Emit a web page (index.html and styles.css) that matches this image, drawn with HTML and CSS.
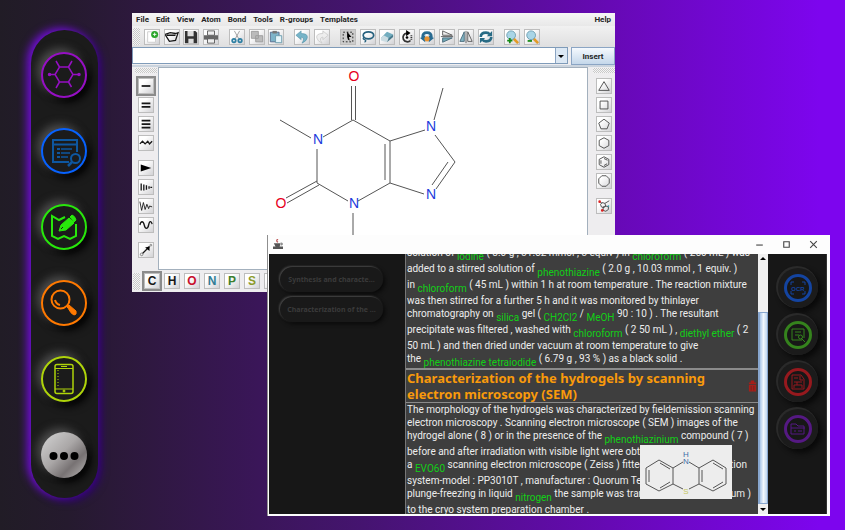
FILE: index.html
```html
<!DOCTYPE html>
<html lang="en">
<head>
<meta charset="utf-8">
<title>Chemistry workspace</title>
<link rel="stylesheet" href="styles.css">
</head>
<body>
<nav class="dock" aria-label="Tools">
  <button class="dock-btn violet" aria-label="Structure"><svg viewBox="0 0 46 46"><path d="M18.500 15h9l4.500 7.500-4.500 7.500h-9L14 22.500zM18.500 15l-3.500-6M27.500 15l3.500-6M32 22.500h6M27.500 30l3 5M18.500 30l-3.500 6M14 22.500H8.500"/><g class="solid"><circle cx="8.500" cy="22.500" r="1"/><circle cx="38" cy="22.500" r="1"/></g></svg></button>
  <button class="dock-btn blue" aria-label="Browse"><svg viewBox="0 0 46 46"><path d="M28 34H12V12h24v12M12 16.500h24" stroke-width="2"/><path d="M16 21h3M16 25h3M16 29h3" stroke-width="2"/><path d="M20 21h11M20 25h9M20 29h7" stroke-width="1.500"/><circle cx="34.500" cy="30.500" r="4.500" stroke-width="2"/><path d="M31 34l-4 4" stroke-width="2.500"/></svg></button>
  <button class="dock-btn green" aria-label="Edit map"><svg viewBox="0 0 46 46"><path d="M24 13l-6 3-7-4v20l6 3 6-3 6 3 6-3V20" stroke-width="2"/><path class="solid" d="M18 27l2-6 8-7 5 5-8 7zM29 13l2-2q3 1 4 5l-2 2z"/><path d="M20 25l2-2" stroke="#1b1b1b"/></svg></button>
  <button class="dock-btn orange" aria-label="Search"><svg viewBox="0 0 46 46"><circle cx="19.500" cy="19.500" r="9" stroke-width="2"/><path d="M14 20q1 4 5 5" stroke-width="2"/><path class="solid" d="M26 27l2-2 7 6q1 4-2 4-3-1-6-7z"/></svg></button>
  <button class="dock-btn lime" aria-label="Mobile"><svg viewBox="0 0 46 46"><rect x="14" y="8.500" width="18" height="29" rx="2" stroke-width="1.500"/><path d="M14 12.500h18M14 33h18M20 10.500h6"/><path d="M17 14v18" stroke-dasharray="1 2"/><circle class="solid" cx="23" cy="35" r="1"/></svg></button>
  <button class="dock-btn more" aria-label="More"><svg viewBox="0 0 46 46"><circle cx="12.500" cy="24" r="4"/><circle cx="23" cy="24" r="4"/><circle cx="33.500" cy="24" r="4"/></svg></button>
</nav>

<section class="window editor" aria-label="Molecule editor">
  <div class="menubar">
    <a href="#">File</a><a href="#">Edit</a><a href="#">View</a><a href="#">Atom</a><a href="#">Bond</a><a href="#">Tools</a><a href="#">R-groups</a><a href="#">Templates</a><a href="#" class="help">Help</a>
  </div>
  <div class="toolbar">
    <span class="grip"></span>
    <div class="group four">
      <button class="tool" aria-label="New"><svg viewBox="0 0 16 16"><path fill="#fff" stroke="#ccc" d="M3 2h9v12H3z"/><circle cx="11" cy="5" r="4" fill="#2aa52a"/><path d="M11 3v4M9 5h4" stroke="#fff"/></svg></button>
      <button class="tool" aria-label="Open"><svg viewBox="0 0 16 16"><path class="ink thick" d="M0 5l6-2 6 1 3-1-3 9-7 1zM2 6h10"/></svg></button>
      <button class="tool" aria-label="Save"><svg viewBox="0 0 16 16"><path fill="#333" d="M1 1h12l2 2v12H1z"/><path fill="#ddd" d="M4 1h7v6H4zM5 10h6v5H5z"/></svg></button>
      <button class="tool" aria-label="Print"><svg viewBox="0 0 16 16"><path fill="#666" d="M0 6h16v5H0z"/><path fill="#eee" stroke="#555" d="M4 1h8v5H4zM4 10h8v5H4z"/></svg></button>
    </div>
    <div class="group three">
      <button class="tool" aria-label="Cut"><svg viewBox="0 0 16 16"><path d="M5 1l5 9M11 1l-5 9" stroke="#999"/><g fill="none" stroke="#2d7fa3" stroke-width="2"><circle cx="4.500" cy="12" r="2"/><circle cx="11.500" cy="12" r="2"/></g></svg></button>
      <button class="tool" aria-label="Copy"><svg viewBox="0 0 16 16"><path fill="#bbb" stroke="#999" d="M1.500 1.500h8v8h-8zM6.500 6.500h8v7h-8z"/></svg></button>
      <button class="tool" aria-label="Paste"><svg viewBox="0 0 16 16"><path fill="#7eb3c9" stroke="#568" d="M1.500 2.500h10v11h-10z"/><path fill="#777" d="M4 1h5v3H4z"/><path fill="#e6f5fa" stroke="#69a" d="M7.500 6.500h7v8h-7z"/></svg></button>
    </div>
    <div class="group two">
      <button class="tool" aria-label="Undo"><svg viewBox="0 0 16 16"><path fill="#76b4c8" stroke="#4a8ba2" stroke-width=".6" d="M1 6l6-5v3q8 0 7 5-1 4-6 6 4-6-1-7v3z"/></svg></button>
      <button class="tool" aria-label="Redo"><svg viewBox="0 0 16 16"><path fill="#eee" stroke="#ccc" d="M15 6l-6-5v3q-8 0-7 5 1 4 6 6-4-6 1-7v3z"/></svg></button>
    </div>
    <div class="group eight">
      <button class="tool dark" aria-label="Select"><svg viewBox="0 0 16 16"><path class="ink" stroke-dasharray="2 2" d="M2.500 2.500h11v11h-11z"/><path d="M7 2l5 6H9l1 4-2-1-1-3z"/></svg></button>
      <button class="tool" aria-label="Lasso"><svg viewBox="0 0 16 16"><ellipse cx="8.500" cy="6" rx="6" ry="4" fill="none" stroke="#28627f" stroke-width="2"/><path d="M4 8q-3 2 0 3t0 3" fill="none" stroke="#28627f" stroke-width="1.500"/></svg></button>
      <button class="tool" aria-label="Erase"><svg viewBox="0 0 16 16"><path fill="#72adbf" d="M1 9l7-7 7 3-7 7z"/><path fill="#cbdce2" d="M1 9l3-3 6 3-2 5-7-2z"/><path fill="#477a8c" d="M8 14l2-5 5-4v3z"/></svg></button>
      <button class="tool" aria-label="Rotate"><svg viewBox="0 0 16 16"><path d="M8 3.500a5 5 0 1 0 4 8.500" fill="none" stroke="#333" stroke-width="2"/><path d="M7 0l5 3.500L7 7z"/><circle cx="8" cy="8.500" r="1.500"/><path d="M13 6v5" stroke="#333" stroke-width="2" stroke-dasharray="1 1"/></svg></button>
      <button class="tool" aria-label="Rotate 3D"><svg viewBox="0 0 16 16"><path d="M3 8q0-5 5-5t5 5" fill="none" stroke="#286b91" stroke-width="3"/><path d="M0 9l6-3v8zM16 9l-6-3v8z" fill="#286b91"/><circle cx="8" cy="10" r="3" fill="#e79334"/></svg></button>
      <button class="tool" aria-label="Flip vertical"><svg viewBox="0 0 16 16"><path d="M1 7.500h14M3 1l11 5H3z" stroke="#555" fill="#eee"/><path d="M3 9h11L3 14z" fill="#72a9b6" stroke="#467"/></svg></button>
      <button class="tool" aria-label="Flip horizontal"><svg viewBox="0 0 16 16"><path d="M6 2v11H1z" fill="#83b6c4" stroke="#467"/><path d="M8 1v14M10 2v11h5z" fill="#eee" stroke="#555"/></svg></button>
      <button class="tool" aria-label="Refresh"><svg viewBox="0 0 16 16"><path d="M2 8q0-5 6-5 3 0 4 2M14 8q0 5-6 5-3 0-4-2" fill="none" stroke="#286b85" stroke-width="3"/><path fill="#286b85" d="M15 1v6H9zM1 15V9h6z"/></svg></button>
    </div>
    <div class="group two">
      <button class="tool" aria-label="Zoom in"><svg viewBox="0 0 16 16"><path d="M10 10l5 5" stroke="#e29b28" stroke-width="3"/><circle cx="7" cy="6" r="5" fill="#a9d5e6" stroke="#6899ad"/><path d="M5.500 9v6M2.500 12h6" stroke="#148a14" stroke-width="2"/></svg></button>
      <button class="tool" aria-label="Zoom out"><svg viewBox="0 0 16 16"><path d="M10 10l5 5" stroke="#e29b28" stroke-width="3"/><circle cx="7" cy="6" r="5" fill="#a9d5e6" stroke="#6899ad"/><path d="M3 12.500h5" stroke="#148a14" stroke-width="2"/></svg></button>
    </div>
  </div>
  <div class="entry">
    <div class="combo"><input type="text" aria-label="Structure name"><button class="arrow" aria-label="Show list"><svg viewBox="0 0 10 10"><path d="M2 4h6L5 7z"/></svg></button></div>
    <button class="insert">Insert</button>
  </div>
  <div class="work">
    <div class="palette left">
      <span class="grip wide"></span>
      <button class="tool selected" aria-label="Single bond"><svg viewBox="0 0 16 16"><path class="ink bold" d="M3 8h10"/></svg></button>
      <button class="tool" aria-label="Double bond"><svg viewBox="0 0 16 16"><path class="ink bold" d="M3 6h10M3 10h10"/></svg></button>
      <button class="tool" aria-label="Triple bond"><svg viewBox="0 0 16 16"><path class="ink bold" d="M3 4h10M3 8h10M3 12h10"/></svg></button>
      <button class="tool" aria-label="Any bond"><svg viewBox="0 0 16 16"><path class="ink thick" d="M1 9l3-3 3 3 3-3 2 3 3-3"/></svg></button>
      <button class="tool split" aria-label="Wedge bond"><svg viewBox="0 0 16 16"><path d="M2 4l12 4-12 4z"/></svg></button>
      <button class="tool" aria-label="Hash bond"><svg viewBox="0 0 16 16"><path class="ink thick" d="M2.500 4v8M5.500 5v7M8.500 6v5M11.500 7v3M13 8.500h2"/></svg></button>
      <button class="tool" aria-label="Squiggle bond"><svg viewBox="0 0 16 16"><path class="ink" d="M1 3l2 10 2-9 2 8 2-6 2 5 1-3 3 1"/></svg></button>
      <button class="tool" aria-label="Wave bond"><svg viewBox="0 0 16 16"><path class="ink thick" d="M1 8C2 3 5 3 6 8s4 5 5 0 3-5 4-1"/></svg></button>
      <button class="tool split" aria-label="Chain"><svg viewBox="0 0 16 16"><path class="ink thick" d="M4 12l8-8"/><path d="M12 4v5L7 5z"/><g fill="none" stroke="#777"><circle cx="3" cy="13" r="1.500"/><circle cx="13.500" cy="2.500" r="1"/></g></svg></button>
    </div>
    <svg class="canvas" viewBox="159 68 428 202" preserveAspectRatio="xMinYMin slice" role="img" aria-label="Caffeine">
      <g class="bonds"><path d="M351.500 86v34M355.500 86v34M353 120l-30 17M280 120l31 18M317 149v34M317 183l31 18M317 181l-31 17M319 185l-32 18M358 201l32-18M390 183v-42M385 180v-36M390 141l-37-21M390 141l35-11M390 183l34 11M434 120l9-32M435 135l20 27-19 27M448 162l-16 23M353 213v40"/></g>
      <g class="atoms"><text class="oxygen" x="354" y="81">O</text><text x="318" y="144">N</text><text class="oxygen" x="281" y="208">O</text><text x="354" y="208">N</text><text x="431" y="131">N</text><text x="431" y="199">N</text></g>
    </svg>
    <div class="palette right">
      <span class="grip wide"></span>
      <button class="tool" aria-label="Triangle"><svg viewBox="0 0 16 16"><path class="shape" d="M8 3l6 10H2z"/></svg></button>
      <button class="tool" aria-label="Square"><svg viewBox="0 0 16 16"><path class="shape" d="M3.500 3.500h9v9h-9z"/></svg></button>
      <button class="tool" aria-label="Pentagon"><svg viewBox="0 0 16 16"><path class="shape" d="M8 2.500l6 4.500-2.500 6.500h-7L2 7z"/></svg></button>
      <button class="tool" aria-label="Hexagon"><svg viewBox="0 0 16 16"><path class="shape" d="M8 2l5.500 3v6L8 14l-5.500-3V5z"/></svg></button>
      <button class="tool" aria-label="Benzene"><svg viewBox="0 0 16 16"><path class="shape" d="M8 2l5.500 3v6L8 14l-5.500-3V5zM8 4l4 2M11.500 10L8 12M4.500 6v4"/></svg></button>
      <button class="tool" aria-label="Octagon"><svg viewBox="0 0 16 16"><path class="shape" d="M5.500 2h5L14 5.500v5L10.500 14h-5L2 10.500v-5z"/></svg></button>
      <button class="tool split" aria-label="Template library"><svg viewBox="0 0 16 16"><path class="shape" d="M6 4l3 1 1 3-2 2-3-1-1-3zM10 8l3 1v3l-3 2-3-1V9zM9 5l5-3M3 3l3 2"/><g fill="#d22"><circle cx="3" cy="3" r="1.500"/><circle cx="6" cy="13" r="1.500"/></g><circle cx="13" cy="8" r="1" fill="#39a"/></svg></button>
    </div>
  </div>
  <div class="elements">
    <span class="grip"></span>
    <button class="tool atom selected">C</button><button class="tool atom">H</button><button class="tool atom el-o">O</button><button class="tool atom el-n">N</button><button class="tool atom el-p">P</button><button class="tool atom el-s">S</button><button class="tool atom" aria-label="More elements"></button>
  </div>
</section>

<section class="window reader" aria-label="Document reader">
  <header class="titlebar">
    <svg class="java" viewBox="0 0 12 12"><path fill="#555" d="M1 5h8l-1 4H3zM0 9h12v3H0z"/><path fill="none" stroke="#b55" stroke-width="1.500" d="M6 0q-3 2 0 4"/><path fill="none" stroke="#555" d="M9 5h2v2H9"/></svg>
    <button aria-label="Minimize"><svg viewBox="0 0 10 10"><path d="M2 5.500h6"/></svg></button>
    <button aria-label="Maximize"><svg viewBox="0 0 10 10"><path d="M2.500 2.500h5v5h-5z"/></svg></button>
    <button aria-label="Close"><svg viewBox="0 0 10 10"><path d="M2 2l6 6M8 2L2 8"/></svg></button>
  </header>
  <div class="content">
    <nav class="outline">
      <button>Synthesis and characte...</button>
      <button>Characterization of the ...</button>
    </nav>
    <main class="document">
      <div class="para first">
        <div class="line tall">solution of <a href="#">iodine</a> ( 8.0 g , 31.52 mmol , 3 equiv ) in <a href="#">chloroform</a> ( 250 mL ) was</div>
        <div class="line tall">added to a stirred solution of <a href="#">phenothiazine</a> ( 2.0 g , 10.03 mmol , 1 equiv. )</div>
        <div class="line tall">in <a href="#">chloroform</a> ( 45 mL ) within 1 h at room temperature . The reaction mixture</div>
        <div class="line">was then stirred for a further 5 h and it was monitored by thinlayer</div>
        <div class="line tall">chromatography on <a href="#">silica</a> gel ( <a href="#">CH2Cl2</a> / <a href="#">MeOH</a> 90 : 10 ) . The resultant</div>
        <div class="line tall">precipitate was filtered , washed with <a href="#">chloroform</a> ( 2 50 mL ) , <a href="#">diethyl ether</a> ( 2</div>
        <div class="line">50 mL ) and then dried under vacuum at room temperature to give</div>
        <div class="line tall">the <a href="#">phenothiazine tetraiodide</a> ( 6.79 g , 93 % ) as a black solid .</div>
      </div>
      <div class="heading">
        <h2>Characterization of the hydrogels by scanning<br>electron microscopy (SEM)</h2>
        <button class="trash" aria-label="Delete section"><svg viewBox="0 0 10 12"><path fill="#a51f1a" d="M1 2h2V0h4v2h2v2H1zM1 5h8v7H1z"/><path stroke="#6d2520" d="M3.500 6v5M6.500 6v5"/></svg></button>
      </div>
      <div class="para">
        <div class="line">The morphology of the hydrogels was characterized by fieldemission scanning</div>
        <div class="line">electron microscopy . Scanning electron microscope ( SEM ) images of the</div>
        <div class="line tall">hydrogel alone ( 8 ) or in the presence of the <a href="#">phenothiazinium</a> compound ( 7 )</div>
        <div class="line">before and after irradiation with visible light were obt</div>
        <div class="line tall spread"><span>a <a href="#">EVO60</a> scanning electron microscope ( Zeiss ) fitted</span><span>tion</span></div>
        <div class="line">system-model : PP3010T , manufacturer : Quorum Te</div>
        <div class="line tall spread last"><span>plunge-freezing in liquid <a href="#">nitrogen</a> the sample was tran</span><span>um )</span></div>
        <div class="line">to the cryo system preparation chamber .</div>
      </div>
      <svg class="preview" viewBox="0 0 92 54" role="img" aria-label="Phenothiazine">
        <path d="M6 23l13-8 14 8v16l-14 7-13-7zM59 23l14-8 13 8v16l-13 7-14-7zM33 23l10-6M49 17l10 6M33 39l10 5M49 44l10-5M9 25v12M20 18l10 6M20 43l10-6M62 25v12M73 18l10 6M73 43l10-6"/>
        <text x="46" y="12">H</text><text x="46" y="19">N</text><text class="sulfur" x="46" y="49">S</text>
      </svg>
    </main>
    <div class="scroll"><button aria-label="Scroll up"><svg viewBox="0 0 10 10"><path d="M2 6h6L5 3z"/></svg></button><span class="track"></span><span class="thumb"></span><button aria-label="Scroll down"><svg viewBox="0 0 10 10"><path d="M2 4h6L5 7z"/></svg></button></div>
    <nav class="actions">
      <button class="c-blue" aria-label="OCR"><svg viewBox="0 0 26 26"><path d="M6 10V7h3M17 7h3v3M20 16v3h-3M9 19H6v-3"/><text x="13" y="16">OCR</text></svg></button>
      <button class="c-green" aria-label="Find in document"><svg viewBox="0 0 26 26"><path d="M17 18H7V7h12v9M10 10h6M10 13h4M16 16l4 4"/><circle cx="15.500" cy="15" r="2"/></svg></button>
      <button class="c-red" aria-label="Export"><svg viewBox="0 0 26 26"><path d="M7 6h9l3 4v10H7zM9 9h4M15 7v4h3M9 13h8M9 19v-3h8v3M12 13v3"/></svg></button>
      <button class="c-purple" aria-label="Open folder"><svg viewBox="0 0 26 26"><path d="M6 18V8h5l2 2h6v8zM6 12h14M9 15h2M13 15h4"/></svg></button>
    </nav>
  </div>
</section>
</body>
</html>
```
FILE: styles.css
```css
* { box-sizing: border-box; }
body {
  margin: 0;
  min-height: 100vh;
  position: relative;
  overflow: hidden;
  padding: 30px 31px;
  background: linear-gradient(90deg, #211c26 0, #251a2e 8%, #2f1841 18%, #451470 43%, #6609b4 72%, #7d05ee 97%);
  font-family: "Liberation Sans", sans-serif;
}
button { padding: 0; border: 0; background: none; font: inherit; color: inherit; }
svg { display: block; }
a { color: inherit; text-decoration: none; }

.dock {
  width: 67px;
  padding: 22px 10px 20px;
  display: flex;
  flex-direction: column;
  gap: 30px;
  border-radius: 34px;
  background: #1b1b1b;
  box-shadow: -4px -2px 8px #700fd3, 3px 3px 9px #310078;
}
.dock-btn {
  width: 46px;
  height: 46px;
  border: 2px solid currentColor;
  border-radius: 50%;
  background: #1b1b1b;
  box-shadow: -4px -4px 9px #4b4b4b, 4px 4px 8px #000;
}
.dock-btn svg { width: 46px; height: 46px; margin: -2px; fill: none; stroke: currentColor; }
.dock-btn .solid { fill: currentColor; }
.violet { color: #960fc4; }
.violet svg { stroke-width: 1.500; }
.blue { color: #0762ff; }
.blue svg { color: #0e57a0; }
.green { color: #28e80b; }
.orange { color: #ff7900; }
.lime { color: #afd40a; }
.more { border: 0; color: #000; background: linear-gradient(135deg, #d5d5d5, #aaa7a7 45%, #777273 70%, #bdbaba); }
.more svg { margin: 0; fill: #000; stroke: none; }

.window { position: absolute; }
.editor {
  left: 132px;
  right: 230px;
  top: 13px;
  background: #eeedef;
  color: #252525;
}
.menubar {
  height: 13px;
  padding: 0 4px;
  display: flex;
  gap: 7px;
  font-family: Roboto, sans-serif;
  font-size: 8px;
  font-weight: bold;
  line-height: 13px;
  background: linear-gradient(#f6f6f6, #e8e8e8);
}
.help { margin-left: auto; }
.toolbar {
  height: 21px;
  display: flex;
  align-items: center;
  gap: 10px;
  background: linear-gradient(#f1f1f1, #dfdfe0);
}
.grip {
  width: 7px;
  height: 17px;
  margin-left: 1px;
  background: repeating-conic-gradient(#c9c9c9 0 25%, #f5f5f5 0 50%) 0 0 / 2px 2px;
}
.toolbar .grip { margin-right: -6px; }
.group { display: flex; justify-content: space-between; }
.four { width: 75px; }
.three { width: 55px; }
.two { width: 36px; }
.eight { width: 154px; }
.tool {
  width: 16px;
  height: 16px;
  flex: none;
  border: 1px solid #bdbdbd;
  background: linear-gradient(135deg, #fff 30%, #d2d2d5);
}
.tool svg { width: 14px; height: 14px; }
.tool.dark { background: #ccc; }
.tool.selected { outline: 2px solid #8b8b8b; }
.ink { fill: none; stroke: #171717; }
.bold { stroke-width: 2; }
.thick { stroke-width: 1.500; }
.shape { fill: none; stroke: #444; }
.entry { height: 18px; display: flex; gap: 3px; }
.combo { flex: 1; height: 17px; display: flex; border: 1px solid #7f9bb9; background: #fff; }
.combo input { flex: 1; min-width: 0; border: 0; padding: 0; background: #fff; outline: none; }
.arrow { width: 12px; border-left: 1px solid #8ba5c4; background: #dce8f4; }
.arrow svg { width: 10px; height: 10px; }
.insert {
  width: 44px;
  border: 1px solid #8ba5c4;
  font-family: Roboto, sans-serif;
  font-size: 8px;
  font-weight: bold;
  background: linear-gradient(#f5f9fe, #c4d7ea);
}
.work { display: flex; align-items: stretch; border-top: 2px solid #cbd4de; }
.palette {
  width: 27px;
  display: flex;
  flex-direction: column;
  align-items: center;
  gap: 3px;
  padding-bottom: 11px;
}
.left { width: 26px; padding-left: 2px; }
.right { padding-left: 4px; }
.grip.wide { width: 22px; height: 5px; margin: 1px 0 2px; }
.split { margin-top: 6px; }
.canvas { flex: 1; min-width: 0; height: 203px; background: #fff; border: 1px solid #a3b0bd; }
.bonds { fill: none; stroke: #555; }
.atoms { fill: #213bdc; font-size: 14px; text-anchor: middle; }
.oxygen { fill: #e6001c; }
.elements {
  height: 22px;
  display: flex;
  align-items: center;
  gap: 4px;
  overflow: hidden;
}
.atom { font-size: 12px; font-weight: bold; line-height: 14px; color: #171717; }
.el-o { color: #c8102c; }
.el-n { color: #307d96; }
.el-p { color: #3c7e2e; }
.el-s { color: #8b9a2b; }

.reader {
  left: 267px;
  right: 15px;
  top: 235px;
  bottom: 14px;
  display: flex;
  flex-direction: column;
  padding: 1px 3px 2px 1px;
  border-left: 1px solid #8f8f8f;
  background: #fdfdfd;
}
.titlebar { height: 18px; flex: none; display: flex; align-items: center; padding: 0 8px 2px 4px; gap: 16px; }
.java { width: 10px; height: 10px; margin-right: auto; }
.titlebar button svg { width: 11px; height: 11px; fill: none; stroke: #444; }
.content { flex: 1; min-height: 0; display: flex; background: #171717; border-right: 1px solid #333; }
.outline {
  width: 136px;
  flex: none;
  padding: 13px 22px 0 11px;
  display: flex;
  flex-direction: column;
  gap: 5px;
}
.outline button {
  height: 25px;
  border-radius: 13px;
  background: #191919;
  box-shadow: -1px -1px 2px #484848, 2px 2px 4px #090909;
  color: #3b3b3b;
  font-family: "Noto Sans", sans-serif;
  font-size: 7px;
  font-weight: bold;
}
.document {
  position: relative;
  flex: 1;
  min-width: 0;
  overflow: hidden;
  border-left: 1px solid #777;
  background: #3e3e3e;
  color: #ededed;
  font-family: Roboto, sans-serif;
  font-size: 10px;
}
.para { padding: 0 7px 0 1px; }
.para.first { margin-top: -8px; }
.line { height: 13px; line-height: 13px; white-space: nowrap; }
.line.tall { height: 16px; }
.line a { color: #12cf17; line-height: 1; vertical-align: -4px; }
.spread { display: flex; justify-content: space-between; padding-right: 4px; }
.last { padding-right: 0; }
.heading {
  display: flex;
  justify-content: space-between;
  align-items: center;
  padding: 0 1px;
  border: solid #8b8b8b;
  border-width: 2px 0 1px;
}
.heading h2 { margin: 0; font-family: "Noto Sans", sans-serif; font-size: 13px; line-height: 16px; color: #f99a0b; white-space: nowrap; }
.trash svg { width: 9px; height: 12px; }
.preview {
  position: absolute;
  right: 26px;
  bottom: 15px;
  width: 92px;
  height: 54px;
  background: #ededed;
  fill: none;
  stroke: #555;
}
.preview text { font-family: "Liberation Sans", sans-serif; font-size: 8px; fill: #416ca8; stroke: none; text-anchor: middle; }
.preview .sulfur { fill: #c5c763; }
.scroll { width: 10px; flex: none; display: flex; flex-direction: column; background: #f0f0f0; }
.scroll button { height: 10px; }
.scroll svg { width: 10px; height: 10px; }
.track { flex: 48; }
.thumb { flex: 192; border: 1px solid #88a6ce; border-left-width: 2px; background: linear-gradient(90deg, #a9c5e8, #f1f7fd 50%, #bdd4ee); }
.actions { width: 58px; flex: none; padding: 20px 0 0 16px; display: flex; flex-direction: column; gap: 19px; }
.actions button {
  width: 28px;
  height: 28px;
  border: 3px solid currentColor;
  border-radius: 50%;
  box-shadow: 0 0 0 6px #1b1b1b, -1px -1px 0 7px #2a2a2a, 3px 3px 5px 7px #0a0a0a;
}
.actions svg { width: 26px; height: 26px; margin: -2px; fill: none; stroke: currentColor; }
.actions text { font-size: 6px; font-weight: bold; fill: currentColor; stroke: none; text-anchor: middle; }
.c-blue { color: #1444a0; }
.c-green { color: #35831d; }
.c-red { color: #96191e; }
.c-purple { color: #551983; }
```
